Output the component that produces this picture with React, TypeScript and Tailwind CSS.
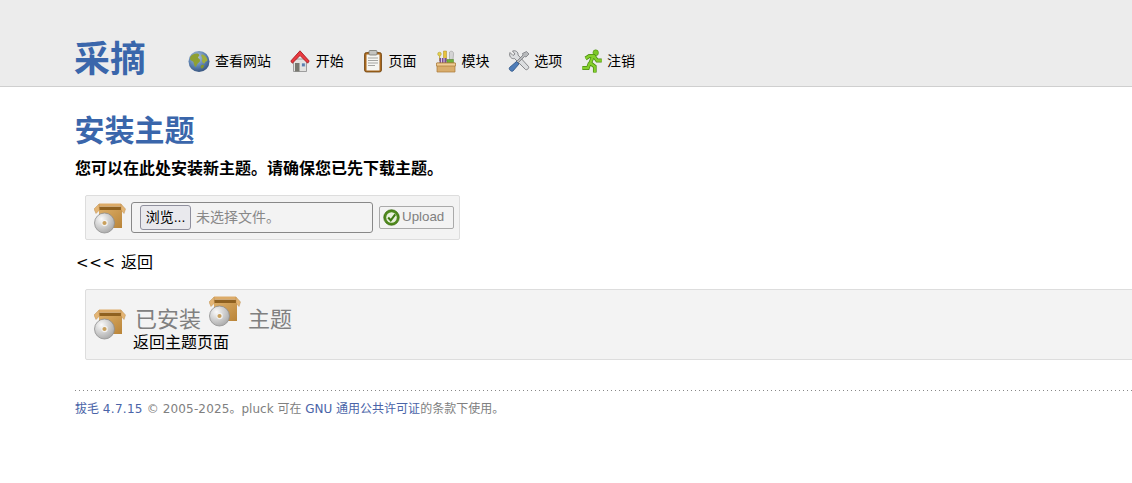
import React from 'react';

const cjk = '"DejaVu Sans", "Noto Sans CJK SC", sans-serif';
const arial = '"Liberation Sans", "Noto Sans CJK SC", sans-serif';

const GlobeIcon = () => (
  <svg width="24" height="24" viewBox="0 0 24 24" className="shrink-0">
    <defs>
      <radialGradient id="sea" cx="40%" cy="30%" r="75%">
        <stop offset="0%" stopColor="#b4c8e0" />
        <stop offset="60%" stopColor="#5a7fae" />
        <stop offset="100%" stopColor="#34507a" />
      </radialGradient>
    </defs>
    <circle cx="12" cy="12.500" r="10.500" fill="url(#sea)" />
    <path d="M6 5.500c2-1 5-1.500 6 0s-1 2-1 3 2 1 2 3-2 2-3 4-1 3-2 2-1-4-2-5-3-1-3-3 1-3 3-4z" fill="#8fa032" />
    <path d="M15 5.500c2 0 4 2 5 4s0 3-1 3-1 2-2 2-2-2-2-3 1-1 0-3-1-3 0-3z" fill="#a0ae3c" />
    <path d="M14 16.500c1-1 3-1 3 0s-1 3-2 3-2-2-1-3z" fill="#84952c" />
  </svg>
);

const HomeIcon = () => (
  <svg width="24" height="24" viewBox="0 0 24 24" className="shrink-0">
    <path d="M5.500 10h13v12.500h-13z" fill="#e2e2e0" stroke="#8c8c8c" strokeWidth="0.8" />
    <path d="M7 14h4.500v8.500H7z" fill="#77776f" />
    <path d="M13.500 14h3.800v3.800h-3.800z" fill="#5a7fae" stroke="#f4f4f4" strokeWidth="0.6" />
    <path d="M2.800 12 12 1.800 21.200 12l-1.500 2.200L12 6.500 4.300 14.200z" fill="#ea3a40" stroke="#a81c22" strokeWidth="0.9" strokeLinejoin="round" />
  </svg>
);

const ClipboardIcon = () => (
  <svg width="24" height="24" viewBox="0 0 24 24" className="shrink-0">
    <rect x="3.500" y="3.500" width="17" height="19.500" rx="2" fill="#a8671c" stroke="#6f4410" strokeWidth="0.8" />
    <rect x="5.500" y="5.500" width="13" height="16" fill="#f6f6f2" />
    <path d="M7 9h10M7 11.500h10M7 14h10M7 16.500h7" stroke="#a4a4a0" strokeWidth="1" />
    <rect x="8" y="1.500" width="8" height="4.500" rx="1" fill="#c4c4c0" stroke="#77776f" strokeWidth="0.8" />
  </svg>
);

const ModulesIcon = () => (
  <svg width="24" height="24" viewBox="0 0 24 24" className="shrink-0">
    <path d="M10.500 2h3v10h-3z" fill="#e8c23c" stroke="#a88a20" strokeWidth="0.5" />
    <circle cx="6.500" cy="5" r="1.800" fill="#e6d24e" stroke="#a89420" strokeWidth="0.5" />
    <path d="M6 6.500h1.200V12H6z" fill="#c8b440" />
    <path d="M16.500 3c2-2 4.500 0 4 2L20 11h-3.500z" fill="#d4d4d4" stroke="#8c8c8c" strokeWidth="0.5" />
    <path d="M6.500 9h7v5h-7z" fill="#7a4f96" />
    <path d="M8.500 9v5M11 9v5" stroke="#f0f0f0" strokeWidth="0.8" />
    <path d="M14 10.500h6.500v4H14z" fill="#6fb13c" stroke="#4c8424" strokeWidth="0.5" />
    <path d="M4 14h18v9H4z" fill="#d9ad6c" stroke="#a97a38" strokeWidth="0.7" />
    <path d="M3.500 14h19v3h-19z" fill="#f0cd96" stroke="#a97a38" strokeWidth="0.7" />
  </svg>
);

const ToolsIcon = () => (
  <svg width="24" height="24" viewBox="0 0 24 24" className="shrink-0">
    <g transform="translate(1 0)">
      <path d="M3 3.500 6 6.500 8 5 5.500 2c3-1 6 1 5.500 4l10.500 11.500c1 1.500-1.500 4-3 3L7.500 9.500C4.500 10.500 1.500 7 3 3.500z" fill="#dcdee0" stroke="#6e7074" strokeWidth="0.8" strokeLinejoin="round" />
      <path d="M19.500 2.500 22 5l-3 3-1.500-.5L10 15l-1.500-1.500L16 6l-.5-1.500z" fill="#b8babc" stroke="#6e7074" strokeWidth="0.7" strokeLinejoin="round" />
      <path d="M9.500 12.500 12 15l-6 7c-1.500 1.200-4.700-1.500-3.500-3.500z" fill="#4f7db8" stroke="#2c5284" strokeWidth="0.8" strokeLinejoin="round" />
    </g>
  </svg>
);

const RunnerIcon = () => (
  <svg width="24" height="24" viewBox="0 0 24 24" className="shrink-0">
    <g transform="translate(2 0) scale(0.92 1)">
      <circle cx="16" cy="3.800" r="3" fill="#7cc828" stroke="#4a8a10" strokeWidth="0.6" />
      <path d="M5 9.500 9 7h5l3.500 4.500h5M13 7.500l-3 6.500 5 3.500v6M9.500 14 7.500 19H1.500" fill="none" stroke="#4a8a10" strokeWidth="4" strokeLinejoin="miter" />
      <path d="M5 9.500 9 7h5l3.500 4.500h5M13 7.500l-3 6.500 5 3.500v6M9.500 14 7.500 19H1.500" fill="none" stroke="#84d02c" strokeWidth="2.400" strokeLinejoin="miter" />
    </g>
  </svg>
);

const PackageIcon = ({ id }: { id: string }) => (
  <svg width="32" height="32" viewBox="0 0 32 32" className="shrink-0">
    <defs>
      <linearGradient id={id} x1="0" y1="0" x2="1" y2="1">
        <stop offset="0%" stopColor="#dcae68" />
        <stop offset="100%" stopColor="#b98438" />
      </linearGradient>
      <radialGradient id={`${id}-disc`} cx="35%" cy="30%" r="80%">
        <stop offset="0%" stopColor="#fafafa" />
        <stop offset="100%" stopColor="#a4a4a4" />
      </radialGradient>
    </defs>
    <path d="M5 7h23v19H5z" fill={`url(#${id})`} />
    <path d="M5 4.500h22V8H5z" fill="#8f6120" />
    <path d="M5 1.500h22v3H5z" fill="#dcab68" />
    <path d="M5 2 0 7l2 4.500L5.500 8z" fill="#e4b574" stroke="#b08040" strokeWidth="0.4" />
    <path d="M27 2l4.500 5-1.500 4.500L27 8z" fill="#e4b574" stroke="#b08040" strokeWidth="0.4" />
    <circle cx="10.500" cy="21" r="10" fill={`url(#${id}-disc)`} stroke="#8e8e8e" strokeWidth="0.8" />
    <circle cx="10.500" cy="21" r="2.700" fill="#c9a05c" stroke="#f2f2f2" strokeWidth="1.200" />
  </svg>
);

const CheckIcon = () => (
  <svg width="17" height="17" viewBox="0 0 18 18" className="shrink-0">
    <circle cx="9" cy="9" r="8.200" fill="#4f8a1c" stroke="#3a6c10" strokeWidth="0.8" />
    <circle cx="9" cy="9" r="5.600" fill="#e8f0dc" />
    <path d="M5.500 9 8.200 12 13 5.800" fill="none" stroke="#3f7a12" strokeWidth="2.200" />
  </svg>
);

const navItems = [
  { icon: <GlobeIcon />, label: '查看网站' },
  { icon: <HomeIcon />, label: '开始' },
  { icon: <ClipboardIcon />, label: '页面' },
  { icon: <ModulesIcon />, label: '模块' },
  { icon: <ToolsIcon />, label: '选项' },
  { icon: <RunnerIcon />, label: '注销' },
];

export default function App() {
  return (
    <div className="min-h-[483px] overflow-hidden bg-white text-black" style={{ fontFamily: cjk }}>
      {/* Header */}
      <div className="flex h-[87px] items-end border-b border-[#cfcfcf] bg-[#ececec] pl-[75px]">
        <div className="mb-[3px] -ml-[1px] text-[36px] leading-[46px] font-bold text-[#3a66ab]">采摘</div>
        <nav className="mb-[13px] ml-[41px] flex gap-[16.8px]">
          {navItems.map((item) => (
            <a key={item.label} className="flex items-center gap-[4px] text-[14px] leading-[24px]">
              {item.icon}
              {item.label}
            </a>
          ))}
        </nav>
      </div>

      {/* Content */}
      <div className="pt-[24px] pl-[75px]">
        <h2 className="-ml-[0.5px] text-[30px] leading-[40px] font-bold text-[#3a66ab]">安装主题</h2>
        <p className="mt-[7px] text-[16px] leading-[22px] font-bold">
          您可以在此处安装新主题。请确保您已先下载主题。
        </p>

        <div className="mt-[15px] ml-[10px] flex h-[45px] w-[375px] items-center rounded-[2px] border border-[#dddddd] bg-[#f3f3f3] pl-[8px]">
          <PackageIcon id="pkg-a" />
          <div className="ml-[5px] mb-[1px] flex h-[31px] w-[242px] items-center rounded-[3px] border border-[#888888] pl-[8px]">
            <button className="h-[25px] w-[51px] rounded-[3px] border border-[#8f8f9d] bg-[#e9e9ed] text-[14px] leading-none" style={{ fontFamily: arial }}>
              浏览...
            </button>
            <span className="ml-[5px] text-[14px] text-[#888888]">未选择文件。</span>
          </div>
          <button className="ml-[6px] mb-[1px] flex h-[23px] w-[75px] items-center gap-[2px] rounded-[2px] border border-[#aaaaaa] pl-[3px] text-[13.33px] text-[#808080]" style={{ fontFamily: arial }}>
            <CheckIcon />
            Upload
          </button>
        </div>

        <p className="mt-[12px] ml-[1px] text-[16px] leading-[22px]">
          <span className="text-[15px] tracking-[0.7px]">&lt;&lt;&lt;</span> 返回
        </p>

        <div className="mt-[15px] -mr-[10px] ml-[10px] h-[71px] rounded-[2px] border border-[#dddddd] bg-[#f3f3f3] pl-[8px]">
          <div className="flex h-[52px] items-end">
            <span className="mb-[2px]">
              <PackageIcon id="pkg-b" />
            </span>
            <span className="mb-[5px] ml-[9px] text-[22px] leading-[34px] text-[#808080]">已安装</span>
            <span className="mb-[15px] ml-[8px]">
              <PackageIcon id="pkg-c" />
            </span>
            <span className="mb-[5px] ml-[7px] text-[22px] leading-[34px] text-[#808080]">主题</span>
          </div>
          <p className="-mt-[8px] ml-[39px] text-[16px] leading-[18px]">返回主题页面</p>
        </div>

        {/* Footer */}
        <div className="mt-[30px] h-px bg-[repeating-linear-gradient(90deg,#888888_0,#888888_1px,transparent_1px,transparent_4px)]" />
        <div className="pt-[10px] text-[12px] leading-[16px] text-[#808080]">
          <a className="text-[#4a64a8]">
            拔毛 <span className="tracking-[0.3px]">4.7.15</span>
          </a>{' '}
          <span className="tracking-[0.15px]">© 2005-2025</span>。pluck 可在{' '}
          <a className="text-[#4a64a8]">GNU 通用公共许可证</a>的条款下使用。
        </div>
      </div>
    </div>
  );
}
